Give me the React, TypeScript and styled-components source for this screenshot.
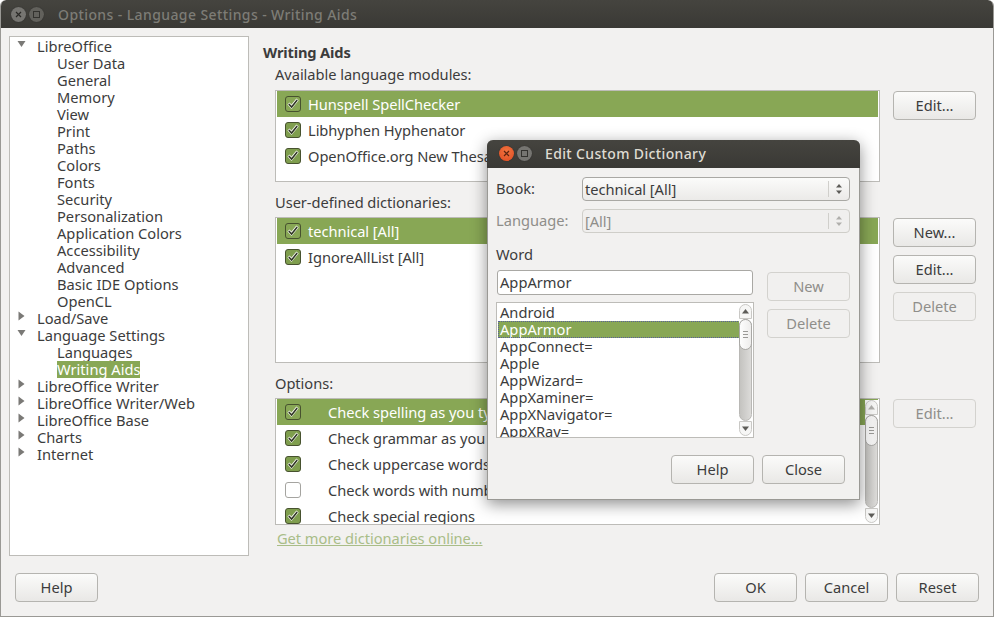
import React from "react";
import styled, {createGlobalStyle} from "styled-components";

const GlobalStyle = createGlobalStyle`
  html, body {
    margin: 0;
    padding: 0;
    background: #fff;
  }
  body {
    font-family: "Noto Sans", "Open Sans", sans-serif;
    font-size: 14.67px;
    color: #3c3c3c;
  }
`;

const SELECTED = "#88a755";

const Screen = styled.div`
  position: relative;
  width: 995px;
  height: 618px;
  overflow: hidden;
  background: #fff;
`;
const Window = styled.div`
  width: 994px;
  height: 617px;
  box-sizing: border-box;
  display: flex;
  flex-direction: column;
  background: #f2f1f0;
  border-right: 1px solid #9a9995;
  border-left: 1px solid #9a9995;
  border-bottom: 1px solid #9a9995;
  border-radius: 6px 6px 0 0;
  overflow: hidden;
`;
const TitleBar = styled.div<{$active?: boolean}>`
  height: 28px;
  flex: none;
  margin: 0 -1px;
  display: flex;
  align-items: center;
  gap: 3px;
  padding-left: ${(p) => (p.$active ? "12px" : "11px")};
  padding-bottom: ${(p) => (p.$active ? "1px" : "0")};
  box-sizing: border-box;
  background: linear-gradient(#45443f, #3a3935);
  border-radius: 6px 6px 0 0;
`;
const CircleBtn = styled.span<{$close?: boolean; $dim?: boolean}>`
  width: 15px;
  height: 15px;
  border-radius: 50%;
  display: flex;
  align-items: center;
  justify-content: center;
  background: ${(p) => (p.$close ? "radial-gradient(circle at 50% 35%, #f0743f, #df4a21)" : p.$dim ? "#62615c" : "#767571")};
  box-shadow: 0 0 1px #222;
`;
const TitleText = styled.span<{$active?: boolean}>`
  margin-left: ${(p) => (p.$active ? "10px" : "11px")};
  font-size: 14px;
  letter-spacing: ${(p) => (p.$active ? "0.36px" : "0.4px")};
  color: ${(p) => (p.$active ? "#dfdbd2" : "#7d7c76")};
  font-weight: 500;
`;
const Body = styled.div`
  flex: 1;
  display: flex;
  padding: 8px 17px 0 8px;
  min-height: 0;
`;
const Tree = styled.div`
  width: 240px;
  height: 520px;
  flex: none;
  box-sizing: border-box;
  background: #fff;
  border: 1px solid #bdbcb8;
  padding-top: 1px;
`;
const TreeRow = styled.div<{$level: number}>`
  height: 17px;
  line-height: 17px;
  white-space: nowrap;
  display: flex;
  align-items: center;
  padding-left: ${(p) => (p.$level ? "47px" : "6px")};
`;
const Arrow = styled.span`
  width: 12px;
  height: 12px;
  margin-top: -5px;
  margin-right: 9px;
  display: flex;
`;
const TreeLabel = styled.span<{$selected?: boolean}>`
  ${(p) => (p.$selected ? `background: ${SELECTED}; color: #fff;` : "")}
`;
const Main = styled.div`
  flex: 1;
  padding: 7px 0 0 14px;
`;
const Heading = styled.div`
  font-weight: 700;
  letter-spacing: -0.15px;
  line-height: 18px;
`;
const Section = styled.div`
  padding-left: 12px;
`;
const Label = styled.div<{$top: number}>`
  margin-top: ${(p) => p.$top}px;
  line-height: 18px;
  letter-spacing: -0.05px;
`;
const SectionRow = styled.div<{$top: number}>`
  margin-top: ${(p) => p.$top}px;
  display: flex;
  align-items: flex-start;
`;
const ListBox = styled.div<{$height: number}>`
  position: relative;
  width: 605px;
  height: ${(p) => p.$height}px;
  box-sizing: border-box;
  flex: none;
  background: #fff;
  border: 1px solid #bdbcb8;
  padding: 0 1px;
  overflow: hidden;
`;
const ListRow = styled.div<{$selected?: boolean; $wide?: boolean}>`
  height: 26px;
  display: flex;
  align-items: center;
  padding-left: 8px;
  gap: ${(p) => (p.$wide ? "27px" : "7px")};
  white-space: nowrap;
  letter-spacing: -0.05px;
  ${(p) => (p.$selected ? `background: ${SELECTED}; color: #fff;` : "")}
`;
const ButtonColumn = styled.div`
  margin-left: 13px;
  display: flex;
  flex-direction: column;
  gap: 8px;
  padding-top: 1px;
`;
const Button = styled.div<{$disabled?: boolean}>`
  width: 83px;
  height: 29px;
  box-sizing: border-box;
  padding-bottom: 2px;
  display: flex;
  align-items: center;
  justify-content: center;
  border-radius: 4px;
  color: ${(p) => (p.$disabled ? "#8f8e8a" : "#3c3c3c")};
  border: 1px solid ${(p) => (p.$disabled ? "#d3d2ce" : "#b5b4b0")};
  background: ${(p) => (p.$disabled ? "#f1f0ef" : "linear-gradient(#fbfbfa, #e9e8e6)")};
`;
const Link = styled.div`
  margin: 4px 0 0 2px;
  color: #a9bd88;
  text-decoration: underline;
  line-height: 18px;
  letter-spacing: -0.05px;
`;
const Footer = styled.div`
  flex: none;
  height: 30px;
  margin: 0 0 13px;
  padding: 0 14px;
  display: flex;
  gap: 8px;
`;
const Spacer = styled.div`
  flex: 1;
`;
const Scrollbar = styled.div`
  position: absolute;
  top: 1px;
  right: 1px;
  bottom: 1px;
  width: 13px;
  display: flex;
  flex-direction: column;
  align-items: center;
  background: #fff;
`;
const ScrollEnd = styled.div<{$bottom?: boolean}>`
  height: 15px;
  width: 13px;
  box-sizing: border-box;
  flex: none;
  display: flex;
  align-items: center;
  justify-content: center;
  border: 1px solid #c9c8c5;
  border-radius: ${(p) => (p.$bottom ? "0 0 7px 7px" : "7px 7px 0 0")};
  background: #f6f6f5;
`;
const ScrollTrack = styled.div`
  flex: 1;
  width: 13px;
  box-sizing: border-box;
  background: linear-gradient(90deg, #c4c3c0, #dcdbd9);
  border: 1px solid #b9b8b5;
  border-radius: 7px;
  position: relative;
`;
const ScrollThumb = styled.div`
  position: absolute;
  top: -1px;
  left: -1px;
  width: 13px;
  height: 31px;
  box-sizing: border-box;
  background: linear-gradient(90deg, #fdfdfd, #eeedec);
  border: 1px solid #a9a8a5;
  border-radius: 7px;
  display: flex;
  flex-direction: column;
  align-items: center;
  justify-content: center;
  gap: 2px;
`;
const Grip = styled.span`
  width: 5px;
  height: 1px;
  background: #9a9996;
`;
const Dialog = styled.div`
  position: absolute;
  left: 487px;
  top: 140px;
  width: 373px;
  height: 360px;
  box-sizing: border-box;
  display: flex;
  flex-direction: column;
  background: #f2f1f0;
  border: 1px solid #9a9995;
  border-top: none;
  border-radius: 6px 6px 0 0;
  box-shadow: 0 4px 16px rgba(0, 0, 0, 0.45);
`;
const DialogBody = styled.div`
  flex: 1;
  padding: 9px 9px 0 8px;
`;
const FieldRow = styled.div<{$disabled?: boolean}>`
  display: flex;
  align-items: center;
  height: 24px;
  margin-bottom: 8px;
  color: ${(p) => (p.$disabled ? "#8f8e8a" : "#3c3c3c")};
`;
const FieldLabel = styled.span`
  width: 86px;
  flex: none;
  margin-top: -2px;
`;
const Combo = styled.div<{$disabled?: boolean}>`
  flex: 1;
  height: 24px;
  box-sizing: border-box;
  display: flex;
  align-items: center;
  padding: 0 0 1px 2px;
  border-radius: 4px;
  letter-spacing: -0.05px;
  border: 1px solid ${(p) => (p.$disabled ? "#cfcec9" : "#a9a8a4")};
  background: ${(p) => (p.$disabled ? "#f0efee" : "linear-gradient(#fbfbfa, #ebeae8)")};
`;
const ComboText = styled.span`
  flex: 1;
`;
const ComboArrows = styled.span`
  width: 20px;
  height: 16px;
  border-left: 1px solid #d0cfcb;
  display: flex;
  align-items: center;
  justify-content: center;
`;
const WordLabel = styled.div`
  margin-top: 12px;
  line-height: 18px;
  height: 18px;
`;
const WordArea = styled.div`
  display: flex;
  margin-top: 7px;
`;
const WordColumn = styled.div`
  width: 258px;
  flex: none;
  display: flex;
  flex-direction: column;
  gap: 7px;
`;
const WordInput = styled.div`
  height: 25px;
  margin-left: 1px;
  width: 256px;
  box-sizing: border-box;
  background: #fff;
  border: 1px solid #a9a8a4;
  border-radius: 3px;
  padding: 0 0 1px 2px;
  display: flex;
  align-items: center;
`;
const WordList = styled.div`
  position: relative;
  height: 136px;
  box-sizing: border-box;
  background: #fff;
  border: 1px solid #bdbcb8;
  padding: 1px 1px 0;
  overflow: hidden;
`;
const WordRow = styled.div<{$selected?: boolean}>`
  height: 17px;
  line-height: 17px;
  padding-left: 2px;
  ${(p) => (p.$selected ? `background: ${SELECTED}; color: #fff; outline: 1px dotted #5a5f9a; outline-offset: -1px;` : "")}
`;
const SideButtons = styled.div`
  margin: 2px 0 0 13px;
  display: flex;
  flex-direction: column;
  gap: 8px;
`;
const DialogFooter = styled.div`
  display: flex;
  justify-content: flex-end;
  gap: 8px;
  margin: 17px 5px 0 0;
`;

const TriangleDown = () => (
  <svg width="12" height="12" viewBox="0 0 12 12">
    <path d="M1.5 3h8L5.5 9z" fill="#7a7976" />
  </svg>
);
const TriangleRight = () => (
  <svg width="12" height="12" viewBox="0 0 12 12">
    <path d="M2.5 1.5v9l6-4.5z" fill="#7a7976" />
  </svg>
);
const UpDown = ({color = "#5d5c58"}: {color?: string}) => (
  <svg width="8" height="14" viewBox="0 0 8 14">
    <path d="M1 5.5h6L4 2z M1 8.5h6L4 12z" fill={color} />
  </svg>
);
const ScrollUp = ({color = "#5d5c58"}: {color?: string}) => (
  <svg width="7" height="5" viewBox="0 0 7 5">
    <path d="M0 4.5h7L3.5 0z" fill={color} />
  </svg>
);
const ScrollDown = () => (
  <svg width="7" height="5" viewBox="0 0 7 5">
    <path d="M0 .5h7L3.5 5z" fill="#5d5c58" />
  </svg>
);
const CheckBox = ({checked = true, selected}: {checked?: boolean; selected?: boolean}) =>
  checked ? (
    <svg width="16" height="16" viewBox="0 0 16 16" style={{flex: "none"}}>
      <rect x=".5" y=".5" width="15" height="15" rx="2.5" fill={selected ? "#88a755" : "#7f9e4e"} stroke="#47522f" />
      <path d="M3.5 7.5l3 3.3 6-7.3" fill="none" stroke="#f4f6ef" strokeWidth="3" />
      <path d="M3.8 8l2.8 3 5.6-7" fill="none" stroke="#2f3524" strokeWidth="1.5" />
    </svg>
  ) : (
    <svg width="16" height="16" viewBox="0 0 16 16" style={{flex: "none"}}>
      <rect x=".5" y=".5" width="15" height="15" rx="2.5" fill="#fff" stroke="#a5a4a0" />
    </svg>
  );
const WindowButtons = ({active}: {active?: boolean}) => (
  <>
    <CircleBtn $close={active}>
      <svg width="7" height="7" viewBox="0 0 7 7">
        <path d="M1 1l5 5M6 1L1 6" stroke={active ? "#5c2410" : "#2a2926"} strokeWidth="1.2" />
      </svg>
    </CircleBtn>
    <CircleBtn $dim={!active}>
      <svg width="7" height="7" viewBox="0 0 7 7">
        <rect x=".5" y=".5" width="6" height="6" fill="none" stroke="#33322e" />
      </svg>
    </CircleBtn>
  </>
);
const ScrollBar = ({dim}: {dim?: boolean}) => (
  <Scrollbar>
    <ScrollEnd>
      <ScrollUp color={dim ? "#b0afac" : undefined} />
    </ScrollEnd>
    <ScrollTrack>
      <ScrollThumb>
        <Grip />
        <Grip />
        <Grip />
      </ScrollThumb>
    </ScrollTrack>
    <ScrollEnd $bottom>
      <ScrollDown />
    </ScrollEnd>
  </Scrollbar>
);

type Node = {label: string; level: number; arrow?: "down" | "right"; selected?: boolean};

const treeNodes: Node[] = [
  {label: "LibreOffice", level: 0, arrow: "down"},
  ...["User Data", "General", "Memory", "View", "Print", "Paths", "Colors", "Fonts", "Security", "Personalization", "Application Colors", "Accessibility", "Advanced", "Basic IDE Options", "OpenCL"].map(
    (label) => ({label, level: 1})
  ),
  {label: "Load/Save", level: 0, arrow: "right"},
  {label: "Language Settings", level: 0, arrow: "down"},
  {label: "Languages", level: 1},
  {label: "Writing Aids", level: 1, selected: true},
  {label: "LibreOffice Writer", level: 0, arrow: "right"},
  {label: "LibreOffice Writer/Web", level: 0, arrow: "right"},
  {label: "LibreOffice Base", level: 0, arrow: "right"},
  {label: "Charts", level: 0, arrow: "right"},
  {label: "Internet", level: 0, arrow: "right"},
];

const options = [
  {label: "Check spelling as you type", checked: true},
  {label: "Check grammar as you type", checked: true},
  {label: "Check uppercase words", checked: true},
  {label: "Check words with numbers", checked: false},
  {label: "Check special regions", checked: true},
];

const words = ["Android", "AppArmor", "AppConnect=", "Apple", "AppWizard=", "AppXaminer=", "AppXNavigator=", "AppXRay="];

const App: React.FC = () => {
  return (
    <Screen>
      <GlobalStyle />
      <Window>
        <TitleBar>
          <WindowButtons />
          <TitleText>Options - Language Settings - Writing Aids</TitleText>
        </TitleBar>
        <Body>
          <Tree>
            {treeNodes.map((node) => (
              <TreeRow key={node.label} $level={node.level}>
                {node.arrow && <Arrow>{node.arrow === "down" ? <TriangleDown /> : <TriangleRight />}</Arrow>}
                <TreeLabel $selected={node.selected}>{node.label}</TreeLabel>
              </TreeRow>
            ))}
          </Tree>
          <Main>
            <Heading>Writing Aids</Heading>
            <Section>
              <Label $top={4}>Available language modules:</Label>
              <SectionRow $top={7}>
                <ListBox $height={92}>
                  <ListRow $selected>
                    <CheckBox selected />
                    Hunspell SpellChecker
                  </ListRow>
                  <ListRow>
                    <CheckBox />
                    Libhyphen Hyphenator
                  </ListRow>
                  <ListRow>
                    <CheckBox />
                    OpenOffice.org New Thesaurus
                  </ListRow>
                </ListBox>
                <ButtonColumn>
                  <Button>Edit...</Button>
                </ButtonColumn>
              </SectionRow>
              <Label $top={11}>User-defined dictionaries:</Label>
              <SectionRow $top={6}>
                <ListBox $height={146}>
                  <ListRow $selected>
                    <CheckBox selected />
                    technical [All]
                  </ListRow>
                  <ListRow>
                    <CheckBox />
                    IgnoreAllList [All]
                  </ListRow>
                </ListBox>
                <ButtonColumn>
                  <Button>New...</Button>
                  <Button>Edit...</Button>
                  <Button $disabled>Delete</Button>
                </ButtonColumn>
              </SectionRow>
              <Label $top={11}>Options:</Label>
              <SectionRow $top={6}>
                <ListBox $height={127}>
                  {options.map((option, i) => (
                    <ListRow key={option.label} $wide $selected={i === 0}>
                      <CheckBox checked={option.checked} selected={i === 0} />
                      {option.label}
                    </ListRow>
                  ))}
                  <ScrollBar dim />
                </ListBox>
                <ButtonColumn>
                  <Button $disabled>Edit...</Button>
                </ButtonColumn>
              </SectionRow>
              <Link>Get more dictionaries online...</Link>
            </Section>
          </Main>
        </Body>
        <Footer>
          <Button>Help</Button>
          <Spacer />
          <Button>OK</Button>
          <Button>Cancel</Button>
          <Button>Reset</Button>
        </Footer>
      </Window>
      <Dialog>
        <TitleBar $active>
          <WindowButtons active />
          <TitleText $active>Edit Custom Dictionary</TitleText>
        </TitleBar>
        <DialogBody>
          <FieldRow>
            <FieldLabel>Book:</FieldLabel>
            <Combo>
              <ComboText>technical [All]</ComboText>
              <ComboArrows>
                <UpDown />
              </ComboArrows>
            </Combo>
          </FieldRow>
          <FieldRow $disabled>
            <FieldLabel>Language:</FieldLabel>
            <Combo $disabled>
              <ComboText>[All]</ComboText>
              <ComboArrows>
                <UpDown color="#b0afac" />
              </ComboArrows>
            </Combo>
          </FieldRow>
          <WordLabel>Word</WordLabel>
          <WordArea>
            <WordColumn>
              <WordInput>AppArmor</WordInput>
              <WordList>
                {words.map((word, i) => (
                  <WordRow key={word} $selected={i === 1}>
                    {word}
                  </WordRow>
                ))}
                <ScrollBar />
              </WordList>
            </WordColumn>
            <SideButtons>
              <Button $disabled>New</Button>
              <Button $disabled>Delete</Button>
            </SideButtons>
          </WordArea>
          <DialogFooter>
            <Button>Help</Button>
            <Button>Close</Button>
          </DialogFooter>
        </DialogBody>
      </Dialog>
    </Screen>
  );
};

export default App;
